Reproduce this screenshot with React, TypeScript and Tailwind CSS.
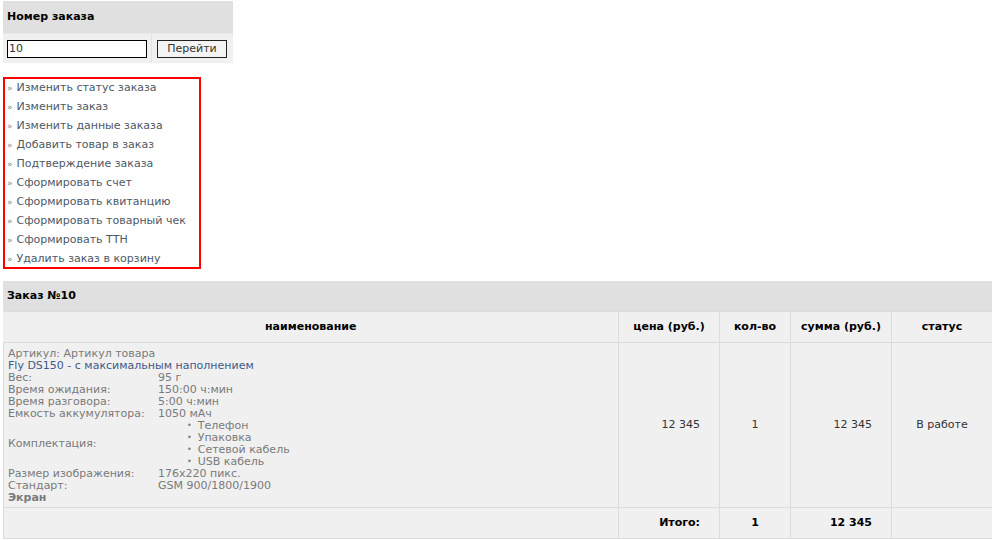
const links = [
  "Изменить статус заказа",
  "Изменить заказ",
  "Изменить данные заказа",
  "Добавить товар в заказ",
  "Подтверждение заказа",
  "Сформировать счет",
  "Сформировать квитанцию",
  "Сформировать товарный чек",
  "Сформировать ТТН",
  "Удалить заказ в корзину",
];

const specs: [string, string][] = [
  ["Вес:", "95 г"],
  ["Время ожидания:", "150:00 ч:мин"],
  ["Время разговора:", "5:00 ч:мин"],
  ["Емкость аккумулятора:", "1050 мАч"],
];

const specs2: [string, string][] = [
  ["Размер изображения:", "176x220 пикс."],
  ["Стандарт:", "GSM 900/1800/1900"],
];

const kit = ["Телефон", "Упаковка", "Сетевой кабель", "USB кабель"];

function SpecRow({ label, value }: { label: string; value: string }) {
  return (
    <div className="flex h-[12px] items-center">
      <span className="w-[150px] shrink-0">{label}</span>
      <span>{value}</span>
    </div>
  );
}

export default function App() {
  return (
    <div className="min-h-[540px] bg-white pl-[3px] pt-[1px] text-[11px] leading-[12px] text-[#7a7a7a]" style={{ fontFamily: "'DejaVu Sans', Verdana, sans-serif" }}>
      {/* order number */}
      <div className="w-[230px]">
        <div className="flex h-[32px] items-center bg-[#e0e0e0] px-[4px] font-bold text-black">Номер заказа</div>
        <div className="flex h-[30px] items-center border-t border-[#e8e8e8] bg-[#f0f0f0]">
          <div className="flex h-full w-[149px] items-center border-r border-[#e4e4e4] pl-[4px]">
            <input
              defaultValue="10"
              className="h-[18px] w-[140px] border border-black bg-white px-[1px] text-[11px] text-[#333] outline-none"
            />
          </div>
          <div className="flex flex-1 items-center pl-[5px]">
            <button className="h-[18px] w-[70px] border border-[#222] bg-[#f4f4f4] text-[11px] text-[#333]">Перейти</button>
          </div>
        </div>
      </div>

      {/* actions */}
      <div className="mt-[14px] flex w-[198px] flex-col gap-[4px] border-2 border-[#ff0000] py-[1px]">
        {links.map((l) => (
          <div key={l} className="flex h-[15px] items-center pl-[2px] text-[#4d5866]">
            <span className="mr-[4px] text-[9px] text-[#888]">»</span>
            <span>{l}</span>
          </div>
        ))}
      </div>

      {/* order table */}
      <div className="mt-[12px] w-[989px]">
        <div className="flex h-[30px] items-center bg-[#e0e0e0] px-[4px] font-bold text-black">Заказ №10</div>
        <table className="w-full border-collapse bg-[#f0f0f0]">
          <thead>
            <tr className="h-[31px] font-bold text-black">
              <th className="w-[615px] border border-[#dcdcdc] border-l-0">наименование</th>
              <th className="w-[101px] border border-[#dcdcdc]">цена (руб.)</th>
              <th className="w-[71px] border border-[#dcdcdc]">кол-во</th>
              <th className="w-[101px] border border-[#dcdcdc]">сумма (руб.)</th>
              <th className="border border-[#dcdcdc] border-r-0">статус</th>
            </tr>
          </thead>
          <tbody>
            <tr className="h-[165px]">
              <td className="border border-[#dcdcdc] px-[4px] pt-[5px] pb-[3px] align-top">
                <div className="h-[12px]">Артикул: Артикул товара</div>
                <div className="h-[12px] text-[#3d5a8a]">Fly DS150 - с максимальным наполнением</div>
                {specs.map(([a, b]) => (
                  <SpecRow key={a} label={a} value={b} />
                ))}
                <div className="flex items-center">
                  <span className="w-[150px] shrink-0">Комплектация:</span>
                  <ul className="pl-[29px]">
                    {kit.map((k) => (
                      <li key={k} className="flex h-[12px] items-center">
                        <span className="mr-[6px] text-[8px]">•</span>
                        {k}
                      </li>
                    ))}
                  </ul>
                </div>
                {specs2.map(([a, b]) => (
                  <SpecRow key={a} label={a} value={b} />
                ))}
                <div className="h-[12px] font-bold">Экран</div>
              </td>
              <td className="border border-[#dcdcdc] pr-[19px] text-right text-[#333]">12 345</td>
              <td className="border border-[#dcdcdc] text-center text-[#333]">1</td>
              <td className="border border-[#dcdcdc] pr-[19px] text-right text-[#333]">12 345</td>
              <td className="border border-[#dcdcdc] border-r-0 text-center text-[#333]">В работе</td>
            </tr>
            <tr className="h-[31px] font-bold text-black">
              <td className="border border-[#dcdcdc]"></td>
              <td className="border border-[#dcdcdc] pr-[19px] text-right">Итого:</td>
              <td className="border border-[#dcdcdc] text-center">1</td>
              <td className="border border-[#dcdcdc] pr-[19px] text-right">12 345</td>
              <td className="border border-[#dcdcdc] border-r-0"></td>
            </tr>
          </tbody>
        </table>
      </div>
    </div>
  );
}
